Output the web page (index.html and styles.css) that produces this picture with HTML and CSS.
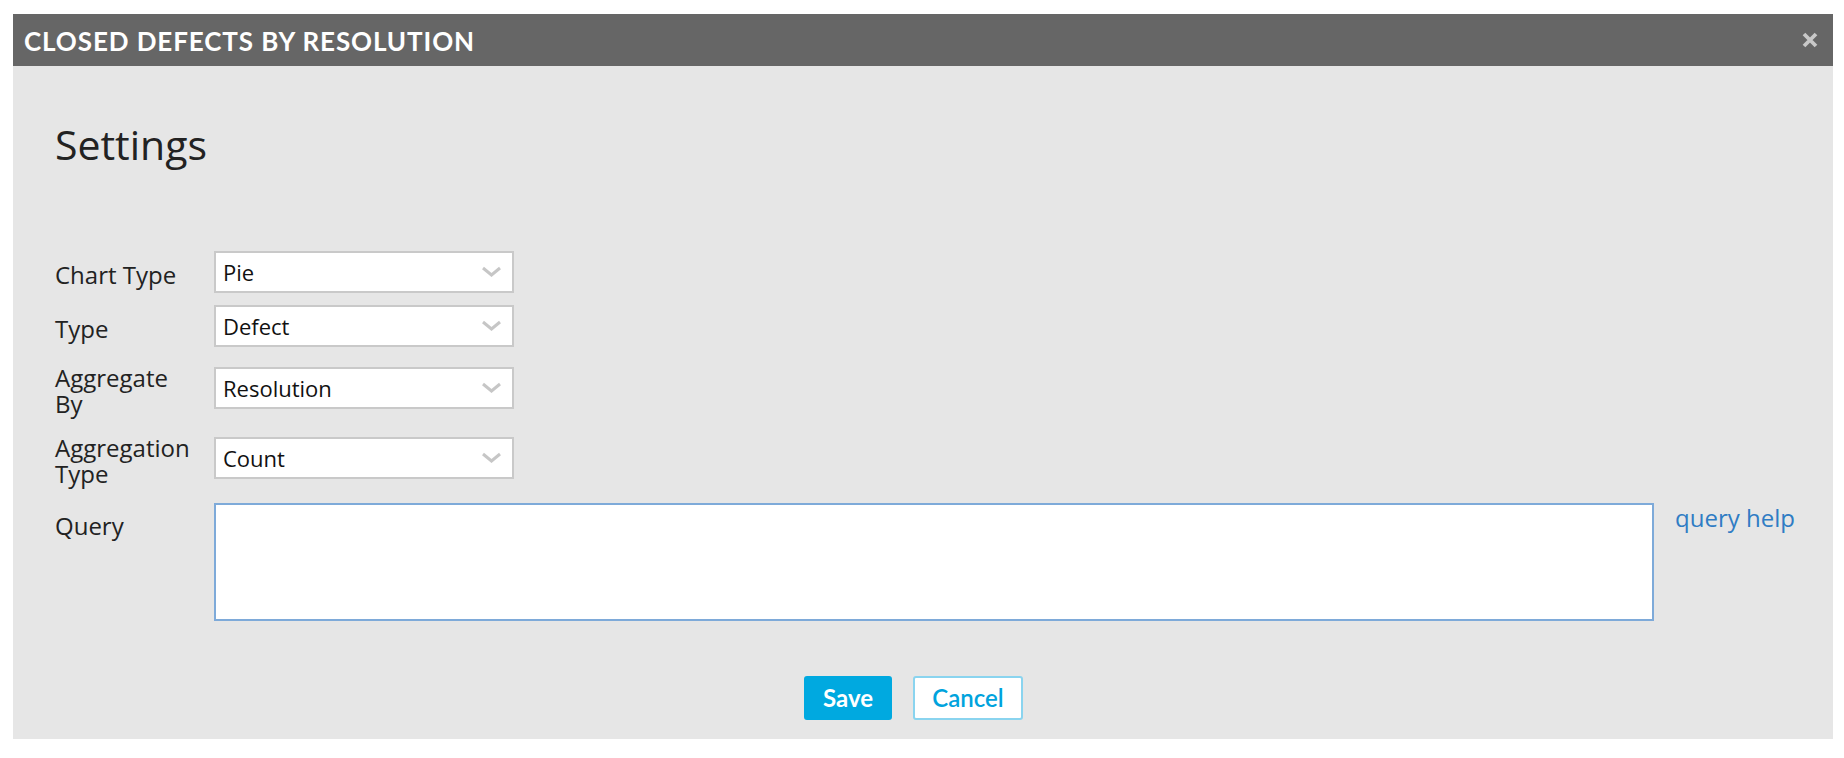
FILE: index.html
```html
<!DOCTYPE html>
<html lang="en">
<head>
<meta charset="utf-8">
<title>Closed Defects by Resolution</title>
<link rel="stylesheet" href="styles.css">
</head>
<body>
<div class="page">
  <section class="panel">
    <header class="panel-header">
      <h1 class="panel-title">CLOSED DEFECTS BY RESOLUTION</h1>
      <button class="close" aria-label="Close">
        <svg width="16" height="16" viewBox="0 0 16 16"><path d="M2 2L14 14M14 2L2 14" stroke="#c8c8c8" stroke-width="3.8" fill="none"/></svg>
      </button>
    </header>
    <div class="panel-body">
      <h2 class="settings-title">Settings</h2>
      <div class="form">
        <div class="row">
          <div class="label">Chart Type</div>
          <div class="select"><span>Pie</span><svg class="chev" width="21" height="12" viewBox="0 0 21 12"><path d="M2 2L10.5 9L19 2" stroke="#c6c6c6" stroke-width="3" fill="none"/></svg></div>
        </div>
        <div class="row">
          <div class="label">Type</div>
          <div class="select"><span>Defect</span><svg class="chev" width="21" height="12" viewBox="0 0 21 12"><path d="M2 2L10.5 9L19 2" stroke="#c6c6c6" stroke-width="3" fill="none"/></svg></div>
        </div>
        <div class="row">
          <div class="label">Aggregate By</div>
          <div class="select"><span>Resolution</span><svg class="chev" width="21" height="12" viewBox="0 0 21 12"><path d="M2 2L10.5 9L19 2" stroke="#c6c6c6" stroke-width="3" fill="none"/></svg></div>
        </div>
        <div class="row">
          <div class="label">Aggregation Type</div>
          <div class="select"><span>Count</span><svg class="chev" width="21" height="12" viewBox="0 0 21 12"><path d="M2 2L10.5 9L19 2" stroke="#c6c6c6" stroke-width="3" fill="none"/></svg></div>
        </div>
        <div class="row row-query">
          <div class="label label-top">Query</div>
          <div class="query"></div>
          <a class="help" href="#">query help</a>
        </div>
      </div>
      <div class="actions">
        <button class="btn btn-save">Save</button>
        <button class="btn btn-cancel">Cancel</button>
      </div>
    </div>
  </section>
</div>
</body>
</html>
```

FILE: styles.css
```css
html, body {
  margin: 0;
  padding: 0;
  background: #ffffff;
}

body {
  font-family: "Open Sans", "Noto Sans", sans-serif;
  color: #222222;
}

.page {
  padding: 14px 11px 0 13px;
}

.panel {
  background: #e6e6e6;
}

.panel-header {
  height: 52px;
  box-sizing: border-box;
  background: #666666;
  display: flex;
  align-items: center;
  justify-content: space-between;
  padding: 2px 15px 0 11px;
}

.panel-title {
  margin: 0;
  font-family: "Lato", "Liberation Sans", sans-serif;
  font-weight: 700;
  font-size: 26px;
  line-height: 40px;
  color: #ffffff;
  letter-spacing: 0.9px;
}

.close {
  border: 0;
  background: transparent;
  padding: 0;
  width: 16px;
  height: 16px;
  display: flex;
  margin-top: -3px;
}

.panel-body {
  padding: 54px 30px 19px 42px;
}

.settings-title {
  margin: 0;
  font-weight: 400;
  font-size: 41px;
  line-height: 48px;
  color: #222222;
}

.form {
  margin-top: 83px;
}

.row {
  display: flex;
  align-items: center;
  margin-bottom: 12px;
}

.row-query {
  align-items: flex-start;
  margin-top: 16px;
  margin-bottom: 0;
}

.label {
  width: 159px;
  flex: none;
  box-sizing: border-box;
  padding: 6px 16px 0 0;
  font-size: 24px;
  line-height: 26px;
  color: #222222;
}

.label-top {
  padding-top: 10px;
}

.select {
  width: 300px;
  height: 42px;
  flex: none;
  box-sizing: border-box;
  border: 2px solid #c9c9c9;
  background: #ffffff;
  display: flex;
  align-items: center;
  justify-content: space-between;
  padding: 0 10px 0 7px;
  font-size: 22px;
  color: #111111;
}

.chev {
  display: block;
}

.query {
  width: 1440px;
  height: 118px;
  flex: none;
  box-sizing: border-box;
  border: 2px solid #7eaad9;
  background: #ffffff;
}

.help {
  margin-left: 21px;
  font-size: 24px;
  line-height: 30px;
  color: #2f7cc4;
  text-decoration: none;
  white-space: nowrap;
}

.actions {
  margin-top: 55px;
  display: flex;
  justify-content: center;
  gap: 21px;
  padding-right: 31px;
}

.btn {
  height: 44px;
  box-sizing: border-box;
  border-radius: 3px;
  font-family: "Lato", "Liberation Sans", sans-serif;
  font-weight: 700;
  font-size: 24px;
  line-height: 40px;
  padding: 0;
}

.btn-save {
  width: 88px;
  background: #00a9e0;
  border: 2px solid #00a9e0;
  color: #ffffff;
}

.btn-cancel {
  width: 110px;
  background: #ffffff;
  border: 2px solid #8ad4ef;
  color: #00a3dd;
  font-weight: 600;
}
```
